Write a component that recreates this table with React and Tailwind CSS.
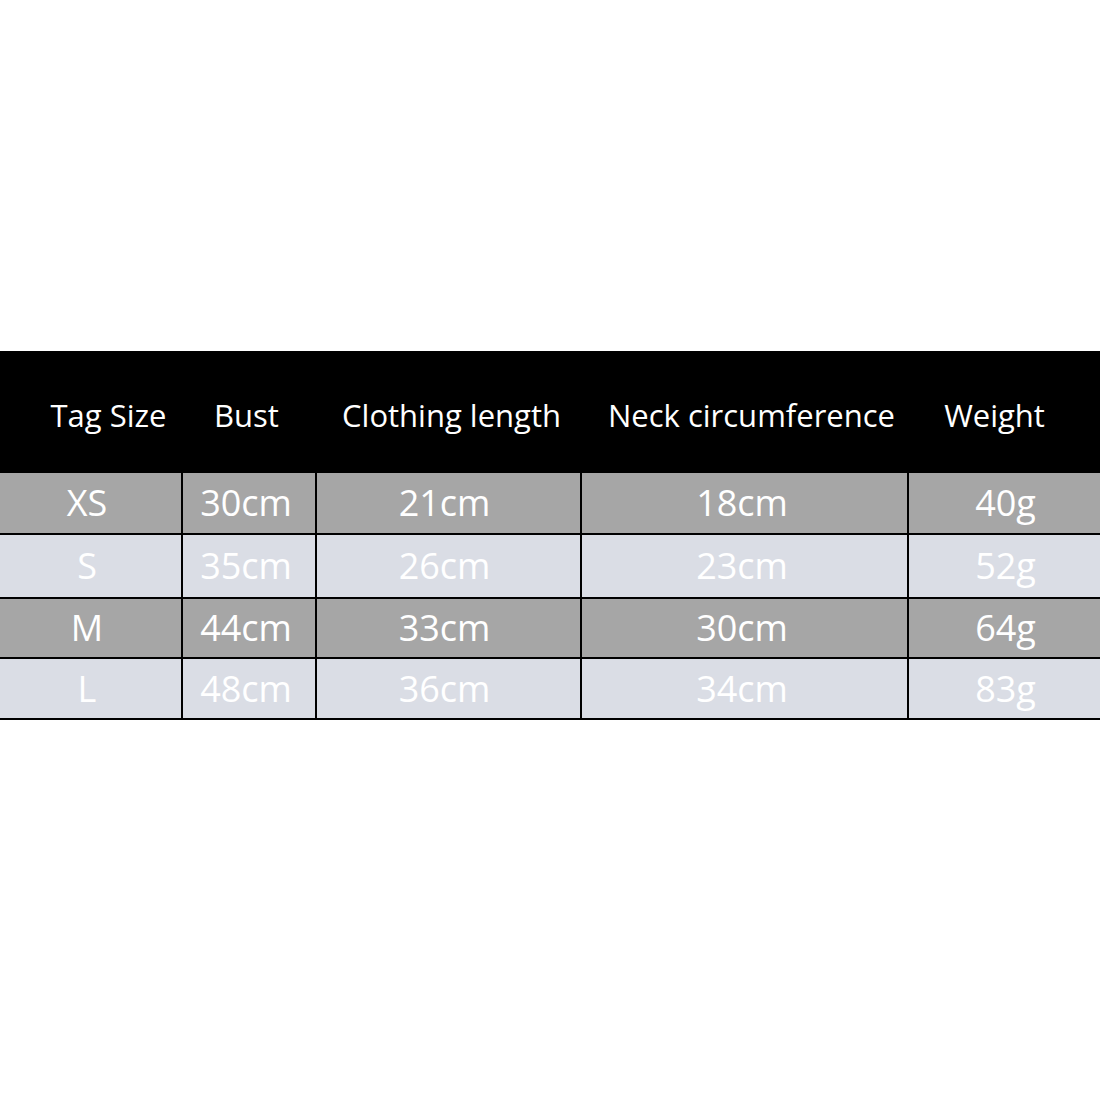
const headers = [
  { label: 'Tag Size', cls: 'pl-[36px]' },
  { label: 'Bust', cls: 'pr-[3px]' },
  { label: 'Clothing length', cls: 'pl-[8px]' },
  { label: 'Neck circumference', cls: 'pl-[16px]' },
  { label: 'Weight', cls: 'pr-[18px]' },
];

const rows = [
  { h: 'h-[62px]', bg: 'bg-[#a6a6a6]', cells: ['XS', '30cm', '21cm', '18cm', '40g'] },
  { h: 'h-[64px]', bg: 'bg-[#dadde5]', cells: ['S', '35cm', '26cm', '23cm', '52g'] },
  { h: 'h-[60px]', bg: 'bg-[#a6a6a6]', cells: ['M', '44cm', '33cm', '30cm', '64g'] },
  { h: 'h-[61px]', bg: 'bg-[#dadde5]', cells: ['L', '48cm', '36cm', '34cm', '83g'] },
];

// body text sits a hair left of each column's centre
const shifts = ['pr-[7px]', 'pr-[6px]', 'pr-[8px]', 'pr-[5px]', 'pl-[2px]'];

export default function App() {
  return (
    <div className="w-[1100px] h-[1100px] bg-white overflow-hidden" style={{ fontFamily: '"Open Sans", "Noto Sans", sans-serif' }}>
      <div className="mt-[351px]">
        {/* header */}
        <div className="grid grid-cols-[181px_134px_265px_327px_1fr] h-[122px] bg-black text-white text-[31px]">
          {headers.map((h) => (
            <div key={h.label} className={`flex items-center justify-center pt-[6px] whitespace-nowrap ${h.cls}`}>
              {h.label}
            </div>
          ))}
        </div>

        {/* body rows */}
        {rows.map((r) => (
          <div key={r.cells[0]} className={`grid grid-cols-[181px_134px_265px_327px_1fr] ${r.h} ${r.bg} border-b-2 border-black text-white text-[36px]`}>
            {r.cells.map((c, i) => (
              <div
                key={i}
                className={`flex items-center justify-center ${shifts[i]} ${i > 0 ? 'border-l-2 border-black' : ''}`}
              >
                {c}
              </div>
            ))}
          </div>
        ))}
      </div>
    </div>
  );
}
